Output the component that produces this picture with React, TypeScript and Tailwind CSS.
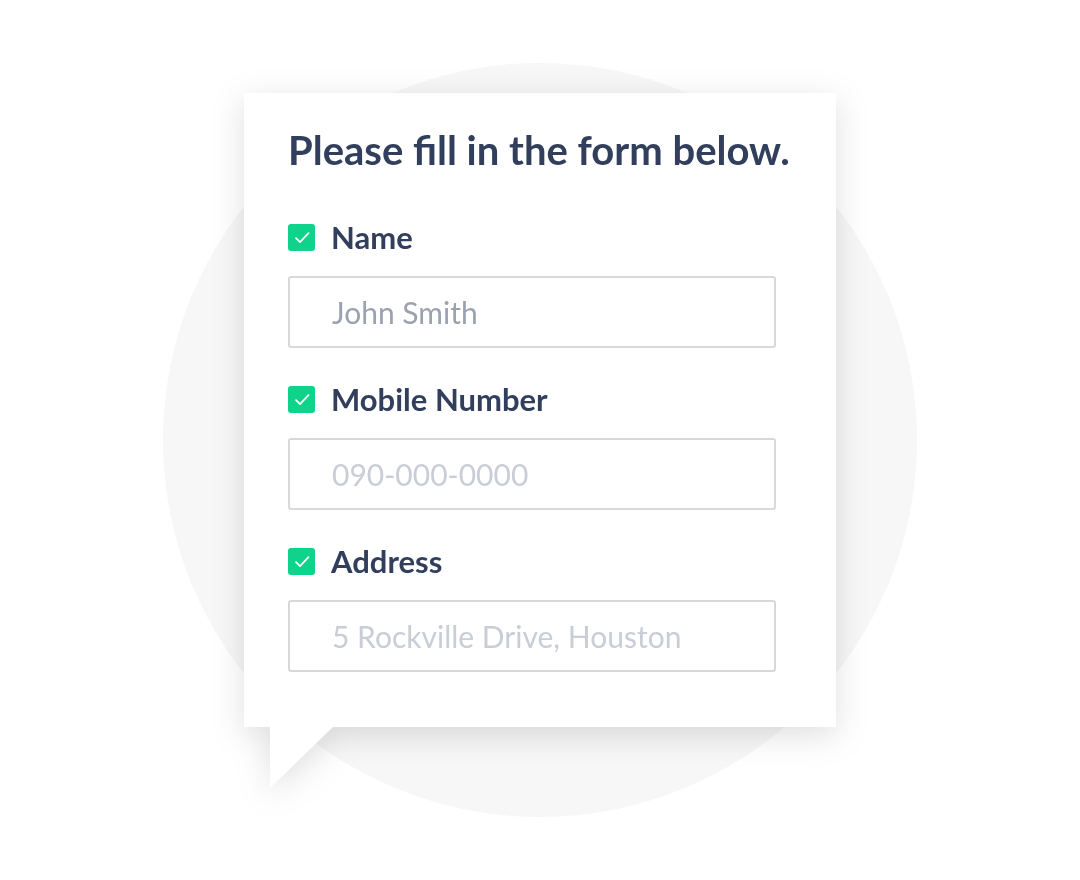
const fields = [
  { label: "Name", placeholder: "John Smith", tone: "text-[#9aa2b1]" },
  { label: "Mobile Number", placeholder: "090-000-0000", tone: "text-[#c9cdd5]" },
  { label: "Address", placeholder: "5 Rockville Drive, Houston", tone: "text-[#c9cdd5]" },
]

function CheckBox() {
  return (
    <span className="flex h-[27px] w-[27px] shrink-0 items-center justify-center rounded-[3px] bg-[#0fd38a]">
      <svg width="27" height="27" viewBox="0 0 27 27" fill="none">
        <path d="M8 14.2 L12 18.2 L20.5 9.2" stroke="white" strokeWidth="1.7" strokeLinecap="round" strokeLinejoin="round" />
      </svg>
    </span>
  )
}

export default function App() {
  return (
    <div className="relative h-[880px] w-[1080px] overflow-hidden bg-white font-['Lato',sans-serif]">
      <div className="absolute left-[163px] top-[63px] h-[754px] w-[754px] rounded-full bg-[#f7f7f7]" />

      <div className="relative flex justify-center pt-[93px]">
        <div className="drop-shadow-[0_8px_16px_rgba(0,0,0,0.13)]">
          <div className="w-[592px] bg-white pb-[55px] pl-[44px] pt-[33px]">
            <h1 className="text-[40px] font-bold leading-[48px] text-[#313f5c]">Please fill in the form below.</h1>

            <div className="mt-[50px] flex flex-col gap-[38px]">
              {fields.map((f) => (
                <div key={f.label}>
                  <div className="flex h-[27px] items-center gap-[16px]">
                    <CheckBox />
                    <span className="text-[31px] font-bold leading-[27px] text-[#313f5c]">{f.label}</span>
                  </div>
                  <div className="mt-[25px] flex h-[72px] w-[488px] items-center rounded-[3px] border-2 border-[#d9d9dc] pl-[42px]">
                    <span className={`text-[30px] leading-[36px] ${f.tone}`}>{f.placeholder}</span>
                  </div>
                </div>
              ))}
            </div>
          </div>
          <div className="pl-[26px]">
            <svg width="63" height="61" viewBox="0 0 63 61" className="block">
              <path d="M0 0 H63 L0 61 Z" fill="white" />
            </svg>
          </div>
        </div>
      </div>
    </div>
  )
}
